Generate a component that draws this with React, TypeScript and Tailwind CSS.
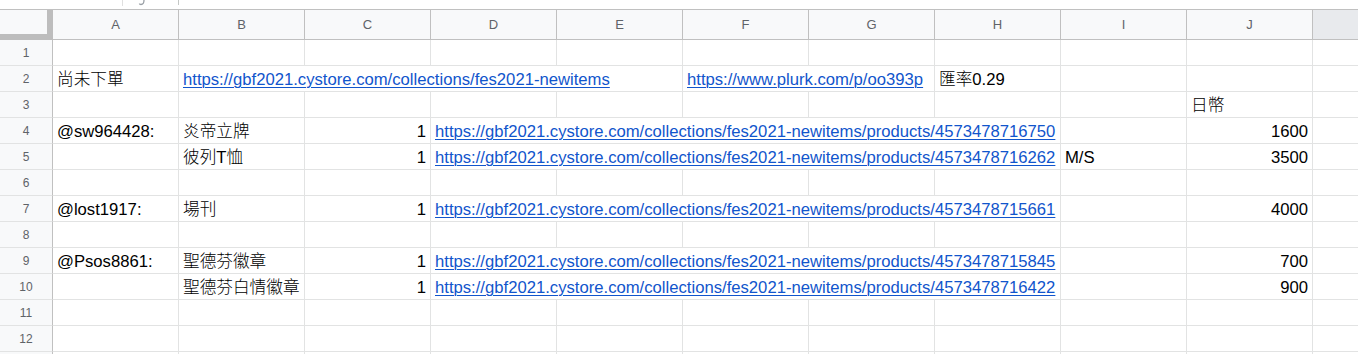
import React from "react";

type Seg = {
  span: number;
  text?: string;
  link?: boolean;
  right?: boolean;
};

const COLUMNS = ["A", "B", "C", "D", "E", "F", "G", "H", "I", "J"];

const SPAN: Record<number, string> = {
  1: "col-span-1",
  2: "col-span-2",
  4: "col-span-4",
  5: "col-span-5",
  10: "col-span-10",
};

const BASE = "https://gbf2021.cystore.com/collections/fes2021-newitems";

const empty = (): Seg[] => [{ span: 1 }, { span: 1 }, { span: 1 }, { span: 1 }, { span: 1 }, { span: 1 }, { span: 1 }, { span: 1 }, { span: 1 }, { span: 1 }];

const item = (who: string, name: string, id: string, price: string, note = ""): Seg[] => [
  { span: 1, text: who },
  { span: 1, text: name },
  { span: 1, text: "1", right: true },
  { span: 5, text: `${BASE}/products/${id}`, link: true },
  { span: 1, text: note },
  { span: 1, text: price, right: true },
];

const ROWS: Seg[][] = [
  empty(),
  [
    { span: 1, text: "尚未下單" },
    { span: 4, text: BASE, link: true },
    { span: 2, text: "https://www.plurk.com/p/oo393p", link: true },
    { span: 1, text: "匯率0.29" },
    { span: 1 },
    { span: 1 },
  ],
  [
    { span: 1 }, { span: 1 }, { span: 1 }, { span: 1 }, { span: 1 },
    { span: 1 }, { span: 1 }, { span: 1 }, { span: 1 },
    { span: 1, text: "日幣" },
  ],
  item("@sw964428:", "炎帝立牌", "4573478716750", "1600"),
  item("", "彼列T恤", "4573478716262", "3500", "M/S"),
  empty(),
  item("@lost1917:", "場刊", "4573478715661", "4000"),
  empty(),
  item("@Psos8861:", "聖德芬徽章", "4573478715845", "700"),
  item("", "聖德芬白情徽章", "4573478716422", "900"),
  empty(),
  empty(),
];

function Cell({ seg }: { seg: Seg }) {
  return (
    <div
      className={`${SPAN[seg.span]} h-[26px] border-r border-b border-[#e2e3e3] flex items-end pb-px px-[4px] whitespace-nowrap overflow-hidden ${
        seg.right ? "justify-end" : "justify-start"
      }`}
    >
      {seg.text ? (
        seg.link ? (
          <span className="leading-[20px] text-[#1155cc] underline decoration-1 underline-offset-[2px]">
            {seg.text}
          </span>
        ) : (
          <span className="leading-[20px] text-black font-light">{seg.text}</span>
        )
      ) : null}
    </div>
  );
}

export default function App() {
  return (
    <div className="w-[1358px] h-[354px] overflow-hidden bg-white font-['Liberation_Sans','Noto_Sans_CJK_TC',sans-serif] text-[16.67px]">
      {/* remains of the formula bar above the grid */}
      <div className="h-[9px] flex">
        <div className="w-[122px]" />
        <div className="w-px h-[6px] bg-[#e0e0e0]" />
        <div className="w-[15px]" />
        <svg width="8" height="6" viewBox="0 0 8 6" className="block">
          <path d="M6 0 C6 3 5 4.5 3 4.5 C2 4.5 1.5 4 1.5 3.5" fill="none" stroke="#9aa0a6" strokeWidth="1.3" />
        </svg>
        <div className="w-[32px]" />
        <div className="w-px h-[5px] bg-[#c4c7c5]" />
      </div>

      {/* column headers */}
      <div className="grid grid-cols-[53px_repeat(10,126px)_1fr] border-t border-[#c0c0c0]">
        <div className="h-[30px] bg-[#f8f9fa] border-r-[6px] border-b-[6px] border-[#bdbdbd]" />
        {COLUMNS.map((c) => (
          <div
            key={c}
            className="h-[30px] bg-[#f8f9fa] border-r border-b border-[#c0c0c0] flex items-center justify-center text-[13px] text-[#5f6368]"
          >
            {c}
          </div>
        ))}
        <div className="h-[30px] bg-[#e8eaed] border-b border-[#c0c0c0]" />
      </div>

      {/* rows */}
      <div className="grid grid-cols-[53px_repeat(10,126px)_1fr]">
        {ROWS.map((row, i) => (
          <React.Fragment key={i}>
            <div className="h-[26px] bg-[#f8f9fa] border-r border-r-[#c0c0c0] border-b border-b-[#e2e3e3] flex items-center justify-center text-[12px] text-[#5f6368]">
              {i + 1}
            </div>
            {row.map((seg, j) => (
              <Cell key={j} seg={seg} />
            ))}
            <div className="h-[26px] border-b border-[#e2e3e3]" />
          </React.Fragment>
        ))}
        <div className="h-[26px] bg-[#f8f9fa] border-r border-[#c0c0c0]" />
        {COLUMNS.map((c) => (
          <div key={c} className="h-[26px] border-r border-[#e2e3e3]" />
        ))}
        <div />
      </div>
    </div>
  );
}
